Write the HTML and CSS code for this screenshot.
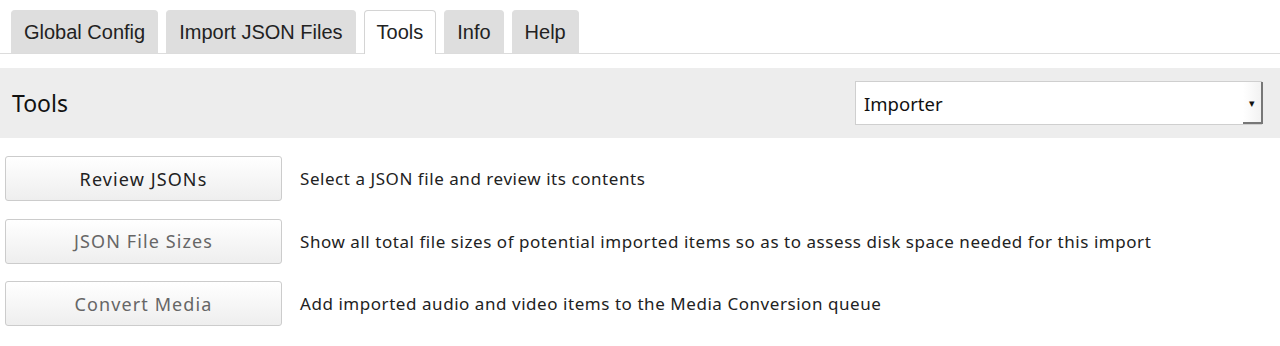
FILE: index.html
```html
<!DOCTYPE html>
<html lang="en">
<head>
    <meta charset="UTF-8">
    <title>Tools</title>
    <link rel="stylesheet" href="styles.css">
</head>
<body>
    <ul class="tabs">
        <li class="tab">Global Config</li>
        <li class="tab">Import JSON Files</li>
        <li class="tab active">Tools</li>
        <li class="tab">Info</li>
        <li class="tab">Help</li>
    </ul>

    <div class="toolbar">
        <h2 class="toolbar-title">Tools</h2>
        <div class="select">
            <span>Importer</span>
            <span class="select-arrow">&#9662;</span>
        </div>
    </div>

    <div class="tool-list">
        <div class="tool-row">
            <button class="tool-btn">Review JSONs</button>
            <span class="tool-desc">Select a JSON file and review its contents</span>
        </div>
        <div class="tool-row">
            <button class="tool-btn muted">JSON File Sizes</button>
            <span class="tool-desc">Show all total file sizes of potential imported items so as to assess disk space needed for this import</span>
        </div>
        <div class="tool-row">
            <button class="tool-btn muted">Convert Media</button>
            <span class="tool-desc">Add imported audio and video items to the Media Conversion queue</span>
        </div>
    </div>
</body>
</html>
```

FILE: styles.css
```css
body {
    margin: 0;
    font-family: "Noto Sans", sans-serif;
    color: #222;
    background: #fff;
}
.tabs {
    list-style: none;
    margin: 0;
    padding: 10px 0 0 11px;
    display: flex;
    gap: 8px;
    border-bottom: 1px solid #dcdcdc;
}
.tab {
    font-family: "Liberation Sans", Arial, sans-serif;
    font-size: 20px;
    color: #222;
    background: #dedede;
    border: 1px solid #dedede;
    border-bottom: none;
    border-radius: 4px 4px 0 0;
    padding: 0 12px;
    height: 42px;
    line-height: 42px;
}
.tab.active {
    background: #fff;
    border-color: #d4d4d4;
    margin-bottom: -1px;
    height: 43px;
}
.toolbar {
    margin-top: 14px;
    background: #ededed;
    height: 70px;
    display: flex;
    align-items: center;
    justify-content: space-between;
    padding: 0 18px 0 12px;
}
.toolbar-title {
    margin: 0;
    font-weight: normal;
    font-size: 23px;
    color: #111;
}
.select {
    width: 407px;
    height: 44px;
    box-sizing: border-box;
    background: #fff;
    border: 1px solid #cfcfcf;
    display: flex;
    align-items: center;
    justify-content: space-between;
    padding: 0 0 0 8px;
    font-size: 18.5px;
    color: #111;
}
.select-arrow {
    width: 20px;
    height: 42px;
    line-height: 42px;
    text-align: center;
    font-size: 11px;
    background: linear-gradient(to right, #fff, #f2f2f2);
    border-right: 2px solid #777;
    border-bottom: 2px solid #777;
    box-sizing: border-box;
    margin-right: -2px;
}
.tool-list {
    padding: 18px 5px 0 5px;
    display: flex;
    flex-direction: column;
    gap: 17.5px;
}
.tool-row {
    display: flex;
    align-items: center;
    gap: 18px;
}
.tool-btn {
    width: 277px;
    height: 45px;
    font-family: "Noto Sans", sans-serif;
    font-size: 18px;
    letter-spacing: 1.1px;
    color: #222;
    background: linear-gradient(#ffffff, #eeeeee);
    border: 1px solid #cccccc;
    border-radius: 3px;
}
.tool-btn.muted {
    color: #666;
}
.tool-desc {
    font-size: 17px;
    letter-spacing: 0.55px;
    color: #222;
}
```
